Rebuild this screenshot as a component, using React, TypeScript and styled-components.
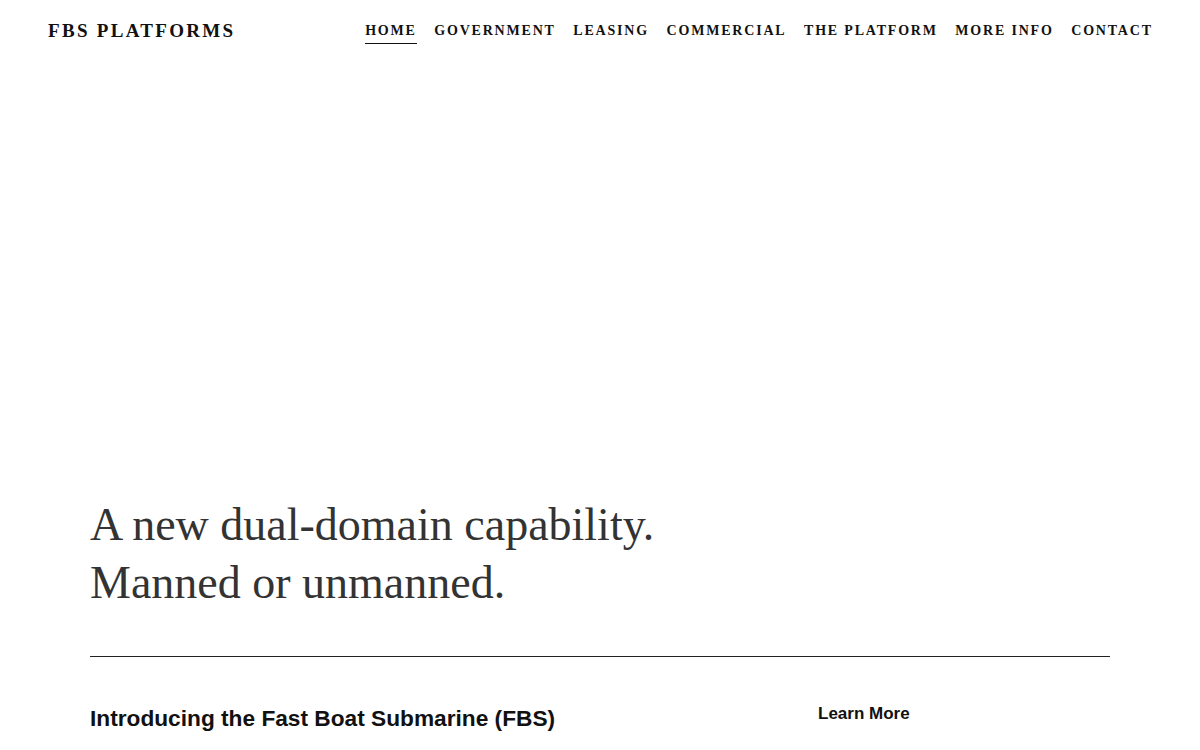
import React from 'react';
import styled, { createGlobalStyle } from 'styled-components';

const GlobalStyle = createGlobalStyle`
  html, body {
    margin: 0;
    padding: 0;
    background: #fff;
  }
  body {
    font-family: 'Liberation Serif', 'Times New Roman', serif;
    color: #111;
  }
  * {
    box-sizing: border-box;
  }
`;

const Header = styled.header`
  display: flex;
  align-items: center;
  justify-content: space-between;
  height: 62px;
  padding: 0 49px 0 48px;
`;

const Logo = styled.a`
  font-family: 'Liberation Serif', 'Times New Roman', serif;
  font-weight: 700;
  font-size: 19px;
  letter-spacing: 2.3px;
  color: #111;
  text-decoration: none;
`;

const Nav = styled.nav`
  display: flex;
  gap: 19.4px;
`;

const NavLink = styled.a<{ $active?: boolean }>`
  font-family: 'Liberation Serif', 'Times New Roman', serif;
  font-weight: 700;
  font-size: 14px;
  letter-spacing: 1.8px;
  color: #111;
  text-decoration: none;
  padding: 5px 0 4px;
  margin-right: -1.8px;
  border-bottom: 1px solid ${(p) => (p.$active ? '#111' : 'transparent')};
`;

const Hero = styled.section`
  display: flex;
  flex-direction: column;
  justify-content: flex-end;
  height: 594px;
  padding: 0 90px;
`;

const Headline = styled.h1`
  margin: 0 0 44px;
  font-family: 'Liberation Serif', 'Times New Roman', serif;
  font-weight: 400;
  font-size: 46px;
  line-height: 58px;
  color: #333;
`;

const Content = styled.section`
  padding: 0 90px;
`;

const Divider = styled.hr`
  margin: 0;
  border: 0;
  border-top: 1px solid #222;
`;

const IntroRow = styled.div`
  display: grid;
  grid-template-columns: 728px 1fr;
  padding-top: 46px;
`;

const IntroTitle = styled.h2`
  margin: 0;
  font-family: 'Liberation Sans', Arial, sans-serif;
  font-weight: 700;
  font-size: 22.7px;
  line-height: 30px;
  color: #111;
`;

const LearnMore = styled.a`
  font-family: 'Liberation Sans', Arial, sans-serif;
  font-weight: 700;
  font-size: 17px;
  line-height: 22px;
  color: #111;
  text-decoration: none;
`;

const navItems = [
  'HOME',
  'GOVERNMENT',
  'LEASING',
  'COMMERCIAL',
  'THE PLATFORM',
  'MORE INFO',
  'CONTACT',
];

export default function App() {
  return (
    <>
      <GlobalStyle />
      <Header>
        <Logo href="#">FBS PLATFORMS</Logo>
        <Nav>
          {navItems.map((item, i) => (
            <NavLink key={item} href="#" $active={i === 0}>
              {item}
            </NavLink>
          ))}
        </Nav>
      </Header>
      <Hero>
        <Headline>
          A new dual-domain capability.
          <br />
          Manned or unmanned.
        </Headline>
      </Hero>
      <Content>
        <Divider />
        <IntroRow>
          <IntroTitle>Introducing the Fast Boat Submarine (FBS)</IntroTitle>
          <LearnMore href="#">Learn More</LearnMore>
        </IntroRow>
      </Content>
    </>
  );
}
